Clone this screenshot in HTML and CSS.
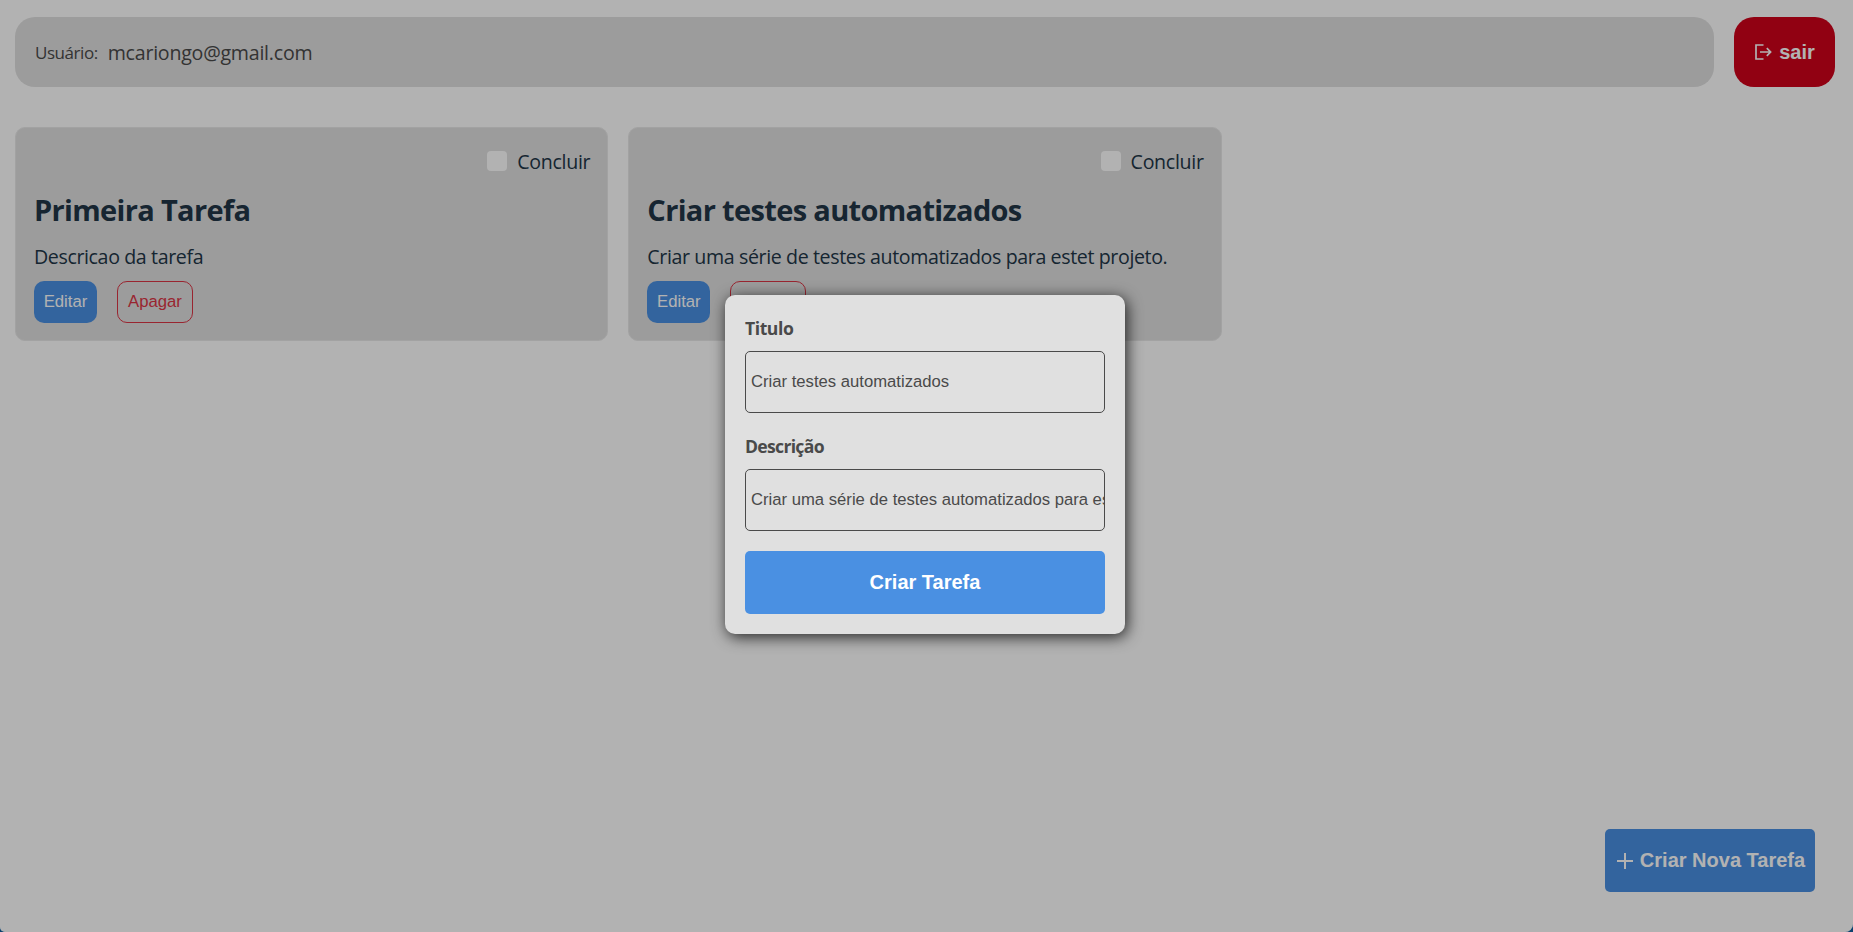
FILE: index.html
```html
<!DOCTYPE html>
<html lang="pt-BR">
<head>
<meta charset="utf-8">
<title>Tarefas</title>
<link rel="stylesheet" href="styles.css">
</head>
<body>
<div class="page">
  <header class="header">
    <div class="user"><span class="user-label">Usuário:</span><span class="user-mail">mcariongo@gmail.com</span></div>
    <button class="logout">
      <svg class="logout-icon" viewBox="0 0 18 18"><path d="M9.5 2H2V16H9.5M6 9H16.4M12.8 5.2L16.6 9L12.8 12.8"/></svg>
      <span>sair</span>
    </button>
  </header>
  <main class="grid">
    <article class="card">
      <label class="done"><span class="box"></span><span class="done-text">Concluir</span></label>
      <h2 class="title">Primeira Tarefa</h2>
      <p class="desc">Descricao da tarefa</p>
      <div class="actions"><button class="edit">Editar</button><button class="delete">Apagar</button></div>
    </article>
    <article class="card">
      <label class="done"><span class="box"></span><span class="done-text">Concluir</span></label>
      <h2 class="title">Criar testes automatizados</h2>
      <p class="desc">Criar uma série de testes automatizados para estet projeto.</p>
      <div class="actions"><button class="edit">Editar</button><button class="delete">Apagar</button></div>
    </article>
  </main>
  <button class="new-task">
    <svg class="plus-icon" viewBox="0 0 16 16"><path d="M8 0V16M0 8H16"/></svg>
    <span>Criar Nova Tarefa</span>
  </button>
  <div class="overlay">
    <form class="modal">
      <label class="field-label">Titulo</label>
      <input class="field" type="text" value="Criar testes automatizados">
      <label class="field-label field-label-desc">Descrição</label>
      <input class="field" type="text" value="Criar uma série de testes automatizados para estet projeto.">
      <button class="submit" type="button">Criar Tarefa</button>
    </form>
  </div>
</div>
</body>
</html>
```
FILE: styles.css
```css
* { box-sizing: border-box; }
body { margin: 0; background: #0d426e; overflow: hidden; font-family: "Segoe UI", "Open Sans", "Noto Sans", sans-serif; color: #213547; }
button { font-family: Arial, "Liberation Sans", sans-serif; margin: 0; border: 0; padding: 0; }
.page { position: relative; height: 932px; padding: 17px 18px 0 15px; background: #fff; border-radius: 0 0 8px 5px; overflow: hidden; }
.header { display: flex; gap: 20px; height: 70px; }
.user { flex: 1; display: flex; align-items: center; gap: 10px; padding: 1px 20px 0; background: #e0e0e0; border-radius: 20px; color: #4a4a4a; white-space: nowrap; }
.user-label { font-size: 17px; letter-spacing: -0.45px; }
.user-mail { font-size: 19.6px; letter-spacing: -0.24px; }
.logout { width: 101px; display: flex; align-items: center; justify-content: center; gap: 7px; border-radius: 20px; background: #d0021b; color: #fff; font-size: 20px; font-weight: 700; }
.logout-icon { width: 18px; height: 18px; fill: none; stroke: #fff; stroke-width: 1.7; }
.grid { display: grid; grid-template-columns: repeat(3, 1fr); gap: 20px; margin-top: 40px; }
.card { height: 214px; padding: 17px 17px 17px 18px; border: 1px solid #e8e8e8; border-radius: 10px; background: #e0e0e0; }
.done { display: flex; align-items: center; justify-content: flex-end; gap: 10px; height: 32px; }
.box { width: 20px; height: 20px; border-radius: 4px; background: #fff; }
.done-text { font-size: 19.6px; letter-spacing: -0.3px; line-height: 34px; padding-top: 1px; }
.title { margin: 13px 0 0; height: 40px; line-height: 40px; font-size: 29px; font-weight: 700; letter-spacing: -0.66px; white-space: nowrap; }
.desc { margin: 11px 0 0; height: 32px; line-height: 32px; font-size: 19.6px; letter-spacing: -0.38px; white-space: nowrap; }
.actions { display: flex; gap: 20px; margin-top: 8px; }
.edit, .delete { height: 42px; border-radius: 10px; font-size: 16.7px; padding-bottom: 1px; }
.edit { width: 63px; background: #4a90e2; color: #fff; }
.delete { width: 76px; border: 1px solid #dc3545; background: transparent; color: #dc3545; }
.new-task { position: absolute; right: 38px; bottom: 40px; width: 210px; height: 63px; display: flex; align-items: center; justify-content: center; gap: 7px; padding-left: 2px; border-radius: 5px; background: #4a90e2; color: #fff; font-size: 20px; font-weight: 700; white-space: nowrap; }
.plus-icon { width: 16px; height: 16px; fill: none; stroke: #fff; stroke-width: 2; }
.overlay { position: absolute; inset: 0; background: rgba(0,0,0,.3); display: flex; justify-content: center; align-items: flex-start; padding: 295px 3px 0 0; }
.modal { width: 400px; height: 339px; padding: 19px 20px 20px; border-radius: 10px; background: #e0e0e0; color: #4a4a4a; box-shadow: 2px 3px 15px rgba(0,0,0,.8); }
.field-label { display: block; height: 28px; line-height: 28px; font-size: 17.6px; font-weight: 700; letter-spacing: -0.45px; margin-bottom: 9px; }
.field-label-desc { letter-spacing: -0.7px; margin-top: -1px; }
.field { display: block; width: 100%; height: 62px; margin: 0 0 20px; padding: 0 0 0 5px; border: 1px solid #4a4a4a; border-radius: 5px; background: transparent; color: #4a4a4a; font-family: Arial, "Liberation Sans", sans-serif; font-size: 16.67px; outline: none; }
.submit { display: block; width: 100%; height: 63px; border-radius: 5px; background: #4a90e2; color: #fff; font-size: 20px; font-weight: 700; }
```
